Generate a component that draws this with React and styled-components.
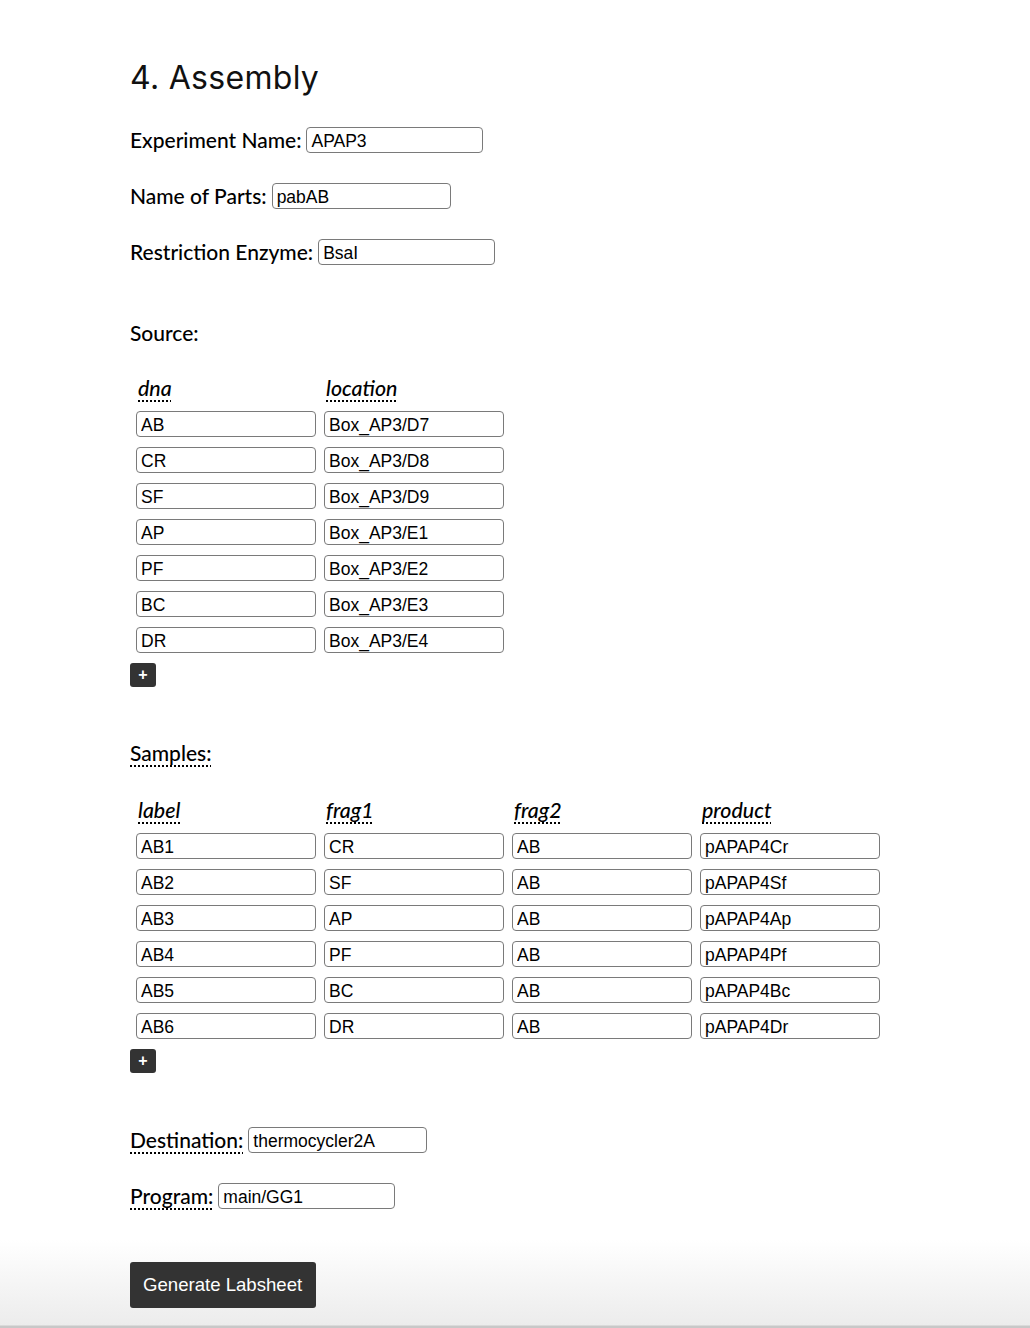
import React from "react";
import styled, { createGlobalStyle } from "styled-components";

const GlobalStyle = createGlobalStyle`
  html, body {
    margin: 0;
    padding: 0;
    background: #fff;
  }
`;

const Page = styled.main`
  min-height: 1328px;
  box-sizing: border-box;
  padding: 56px 0 0 130px;
  font-family: Lato, "Open Sans", sans-serif;
  color: #000;
  background: linear-gradient(
    to bottom,
    #fff 0,
    #fff 1240px,
    #ececec 1325px,
    #c8c8c8 1326px,
    #c8c8c8 1328px
  );
`;

const Title = styled.h1`
  margin: 0 0 27px;
  font-family: Inter, "Open Sans", sans-serif;
  font-weight: 400;
  font-size: 32px;
  line-height: 44px;
  letter-spacing: 0.3px;
  color: #111;
`;

const Field = styled.div`
  display: flex;
  align-items: center;
  gap: 5px;
  height: 26px;
  margin-top: ${(p) => p.$top || 0}px;
  margin-bottom: ${(p) => p.$space ?? 30}px;
`;

const Label = styled.label`
  font-size: 21px;
  font-weight: 500;
  line-height: 26px;
  white-space: nowrap;
`;

const Abbr = styled.abbr`
  text-decoration: underline dotted;
  text-underline-offset: 4px;
  text-decoration-thickness: 2px;
  cursor: help;
`;

const TextInput = styled.input`
  box-sizing: border-box;
  width: ${(p) => p.$w || 178}px;
  height: 26px;
  padding: 2px 4px 0;
  border: 1px solid #7a7a7a;
  border-radius: 4px;
  font-family: "Liberation Sans", Arial, sans-serif;
  font-size: 17.5px;
  color: #000;
  background: #fff;
  outline: none;
`;

const SectionTitle = styled.div`
  font-size: 21px;
  font-weight: 500;
  line-height: 26px;
  margin: ${(p) => p.$top}px 0 ${(p) => p.$bottom}px;
`;

const Grid = styled.div`
  display: grid;
  grid-template-columns: repeat(${(p) => p.$cols}, 180px);
  column-gap: 8px;
  row-gap: 10px;
  margin-left: 6px;
`;

const ColHead = styled.div`
  font-style: italic;
  font-weight: 500;
  font-size: 21.4px;
  line-height: 24px;
  padding-left: 2px;
  margin-bottom: 1px;
`;

const AddButton = styled.button`
  display: flex;
  align-items: center;
  justify-content: center;
  width: 26px;
  height: 24px;
  margin-top: 10px;
  padding: 0;
  border: none;
  border-radius: 3px;
  background: #333;
  color: #fff;
  font-family: "Liberation Sans", Arial, sans-serif;
  font-weight: 700;
  font-size: 16px;
  cursor: pointer;
`;

const Generate = styled.button`
  height: 46px;
  padding: 0 14px 0 13px;
  border: none;
  border-radius: 3px;
  background: #333;
  color: #fff;
  font-family: "Liberation Sans", Arial, sans-serif;
  font-size: 18.6px;
  cursor: pointer;
`;

const sources = [
  ["AB", "Box_AP3/D7"],
  ["CR", "Box_AP3/D8"],
  ["SF", "Box_AP3/D9"],
  ["AP", "Box_AP3/E1"],
  ["PF", "Box_AP3/E2"],
  ["BC", "Box_AP3/E3"],
  ["DR", "Box_AP3/E4"],
];

const samples = [
  ["AB1", "CR", "AB", "pAPAP4Cr"],
  ["AB2", "SF", "AB", "pAPAP4Sf"],
  ["AB3", "AP", "AB", "pAPAP4Ap"],
  ["AB4", "PF", "AB", "pAPAP4Pf"],
  ["AB5", "BC", "AB", "pAPAP4Bc"],
  ["AB6", "DR", "AB", "pAPAP4Dr"],
];

const Table = ({ heads, rows }) => (
  <>
    <Grid $cols={heads.length}>
      {heads.map((h) => (
        <ColHead key={h}>
          <Abbr title={h}>{h}</Abbr>
        </ColHead>
      ))}
      {rows.map((row, i) =>
        row.map((v, j) => (
          <TextInput key={i + "-" + j} defaultValue={v} $w={180} />
        ))
      )}
    </Grid>
    <AddButton>+</AddButton>
  </>
);

export default function App() {
  return (
    <>
      <GlobalStyle />
      <Page>
        <Title>4. Assembly</Title>
        <Field>
          <Label>Experiment Name:</Label>
          <TextInput defaultValue="APAP3" $w={177} />
        </Field>
        <Field>
          <Label>Name of Parts:</Label>
          <TextInput defaultValue="pabAB" $w={179} />
        </Field>
        <Field $space={0}>
          <Label>Restriction Enzyme:</Label>
          <TextInput defaultValue="BsaI" $w={177} />
        </Field>

        <SectionTitle $top={55} $bottom={30}>Source:</SectionTitle>
        <Table heads={["dna", "location"]} rows={sources} />

        <SectionTitle $top={53} $bottom={32}>
          <Abbr title="Samples">Samples:</Abbr>
        </SectionTitle>
        <Table heads={["label", "frag1", "frag2", "product"]} rows={samples} />

        <Field $top={54}>
          <Label>
            <Abbr title="Destination">Destination:</Abbr>
          </Label>
          <TextInput defaultValue="thermocycler2A" $w={179} />
        </Field>
        <Field $space={53}>
          <Label>
            <Abbr title="Program">Program:</Abbr>
          </Label>
          <TextInput defaultValue="main/GG1" $w={177} />
        </Field>

        <Generate>Generate Labsheet</Generate>
      </Page>
    </>
  );
}
